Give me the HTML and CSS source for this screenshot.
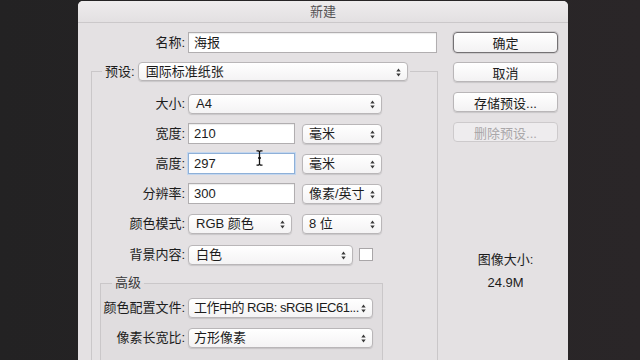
FILE: index.html
```html
<!DOCTYPE html>
<html lang="zh-CN">
<head>
  <meta charset="UTF-8" />
  <meta name="viewport" content="width=device-width, initial-scale=1" />
  <title>新建</title>
  <link rel="stylesheet" href="styles.css">
</head>
<body>
  <svg width="0" height="0" class="defs">
    <symbol id="updown" viewBox="0 0 5 9">
      <path d="M0.3 3.6 L2.5 0.6 L4.7 3.6 Z M0.3 5.4 L2.5 8.4 L4.7 5.4 Z" fill="#3a3a3a" />
    </symbol>
  </svg>

  <div class="window">
    <div class="titlebar">新建</div>

    <div class="content">
      <div class="main">
        <div class="row name-row">
          <label class="lbl">名称:</label>
          <div class="field name-field">海报</div>
        </div>

        <fieldset class="group preset">
          <legend>
            <span class="legend-inner">
              <label class="lbl-inline">预设:</label>
              <div class="popup preset-popup">国际标准纸张<svg class="arrows"><use href="#updown" /></svg></div>
            </span>
          </legend>

          <div class="row">
            <label class="lbl">大小:</label>
            <div class="popup size-popup">A4<svg class="arrows"><use href="#updown" /></svg></div>
          </div>

          <div class="row">
            <label class="lbl">宽度:</label>
            <div class="field num">210</div>
            <div class="popup unit">毫米<svg class="arrows"><use href="#updown" /></svg></div>
          </div>

          <div class="row">
            <label class="lbl">高度:</label>
            <div class="field num focused">297
              <svg class="ibeam" viewBox="0 0 7 16"><path d="M0.5 0.8 H2.5 L3.5 1.8 L4.5 0.8 H6.5 M3.5 1.8 V14.2 M0.5 15.2 H2.5 L3.5 14.2 L4.5 15.2 H6.5 M2 8 H5" stroke="#111" stroke-width="1.3" fill="none" /></svg>
            </div>
            <div class="popup unit">毫米<svg class="arrows"><use href="#updown" /></svg></div>
          </div>

          <div class="row">
            <label class="lbl">分辨率:</label>
            <div class="field num">300</div>
            <div class="popup unit">像素/英寸<svg class="arrows"><use href="#updown" /></svg></div>
          </div>

          <div class="row">
            <label class="lbl">颜色模式:</label>
            <div class="popup mode-popup">RGB 颜色<svg class="arrows"><use href="#updown" /></svg></div>
            <div class="popup unit bits">8 位<svg class="arrows"><use href="#updown" /></svg></div>
          </div>

          <div class="row bg-row">
            <label class="lbl">背景内容:</label>
            <div class="popup bg-popup">白色<svg class="arrows"><use href="#updown" /></svg></div>
            <div class="swatch"></div>
          </div>

          <fieldset class="group advanced">
            <legend>高级</legend>
            <div class="row">
              <label class="lbl">颜色配置文件:</label>
              <div class="popup adv-popup"><span class="tight">工作中的 RGB: sRGB IEC61...</span><svg class="arrows"><use href="#updown" /></svg></div>
            </div>
            <div class="row">
              <label class="lbl">像素长宽比:</label>
              <div class="popup adv-popup">方形像素<svg class="arrows"><use href="#updown" /></svg></div>
            </div>
          </fieldset>
        </fieldset>
      </div>

      <div class="side">
        <button class="btn default">确定</button>
        <button class="btn">取消</button>
        <button class="btn">存储预设...</button>
        <button class="btn" disabled>删除预设...</button>

        <div class="info">
          <div>图像大小:</div>
          <div>24.9M</div>
        </div>
      </div>
    </div>
  </div>
</body>
</html>
```

FILE: styles.css
```css
body {
  margin: 0;
  height: 360px;
  overflow: hidden;
  background: linear-gradient(to right, #232223, #2a2628);
  font-family: "Liberation Sans", "Noto Sans CJK SC", sans-serif;
  font-size: 13px;
  color: #1c1c1c;
}

.defs {
  position: absolute;
}

.window {
  margin: 1px 0 0 78px;
  width: 490px;
  height: 400px;
  background: #e4e1e3;
  border-radius: 5px 5px 0 0;
  overflow: hidden;
}

.titlebar {
  height: 21px;
  line-height: 22px;
  text-align: center;
  background: linear-gradient(#eeeced, #e3e0e2);
  border-bottom: 1px solid #cbc8ca;
  color: #555355;
}

.content {
  display: flex;
  padding: 9px 10px 0 0;
}

.main {
  width: 360px;
  flex-shrink: 0;
}

.row {
  display: flex;
  align-items: center;
  height: 21px;
  margin-bottom: 9px;
}

.lbl {
  flex-shrink: 0;
  width: 93px;
  margin-right: 3px;
  text-align: right;
  line-height: 21px;
}

.name-row .lbl {
  width: 107px;
}

/* text fields */
.field {
  position: relative;
  box-sizing: border-box;
  height: 21px;
  line-height: 19px;
  padding-left: 5px;
  background: #fff;
  border: 1px solid #b1aeb0;
  box-shadow: inset 0 1px 1px rgba(0, 0, 0, 0.08);
}

.name-field {
  width: 249px;
}

.num {
  width: 107px;
  margin-right: 7px;
}

.focused {
  border-color: #8eb0d8;
  box-shadow: 0 0 0 1px #c3d6ee;
}

.ibeam {
  position: absolute;
  left: 67px;
  top: -4px;
  width: 7px;
  height: 16px;
}

/* popup menus */
.popup {
  position: relative;
  box-sizing: border-box;
  height: 20px;
  line-height: 18px;
  padding-left: 7px;
  background: linear-gradient(#ffffff, #f4f3f4);
  border: 1px solid #b9b6b8;
  border-radius: 4px;
  box-shadow: 0 1px 1px rgba(0, 0, 0, 0.12);
  white-space: nowrap;
}

.arrows {
  position: absolute;
  right: 6px;
  top: 5px;
  width: 5px;
  height: 9px;
}

.unit {
  width: 80px;
  padding-left: 6px;
}

.size-popup {
  width: 194px;
}

.mode-popup {
  width: 104px;
  margin-right: 10px;
}

.bg-popup {
  width: 165px;
  margin-right: 6px;
}

.adv-popup {
  width: 185px;
  padding-left: 5px;
}

.tight {
  letter-spacing: -0.5px;
}

.bg-row {
  margin-top: 10px;
}

.swatch {
  width: 14px;
  height: 13px;
  box-sizing: border-box;
  background: #fff;
  border: 1px solid #a9a6a8;
}

/* group boxes */
.group {
  margin: 0;
  padding: 0;
  border: 1px solid #cac7c9;
  min-width: 0;
}

.preset {
  box-sizing: border-box;
  width: 347px;
  margin: 7px 0 0 13px;
  padding: 12px 0 40px 0;
}

.preset > legend {
  margin-left: 10px;
  padding: 0 2px 0 3px;
}

.legend-inner {
  display: flex;
  align-items: center;
  height: 19px;
}

.lbl-inline {
  line-height: 19px;
  margin-right: 3px;
}

.preset-popup {
  width: 270px;
  height: 19px;
  line-height: 17px;
}

.advanced {
  box-sizing: border-box;
  width: 283px;
  margin: 7px 0 0 8px;
  padding: 5px 0 20px 0;
  background: rgba(0, 0, 0, 0.015);
}

.advanced > legend {
  margin-left: 11px;
  padding: 0 3px;
  line-height: 18px;
  color: #3a393a;
}

.advanced .lbl {
  width: 84px;
}

/* side buttons */
.side {
  width: 105px;
  margin-left: 15px;
  display: flex;
  flex-direction: column;
  gap: 10px;
}

.btn {
  height: 20px;
  padding: 0;
  font: inherit;
  color: #1c1c1c;
  background: linear-gradient(#ffffff, #f3f2f3);
  border: 1px solid #b9b6b8;
  border-radius: 4px;
  box-shadow: 0 1px 1px rgba(0, 0, 0, 0.12);
}

.btn.default {
  height: 21px;
  border-color: #747174;
  box-shadow: 0 0 0 1px rgba(0, 0, 0, 0.1);
}

.side .btn.default + .btn {
  margin-top: -1px;
}

.btn:disabled {
  color: #aaa7a9;
  background: #eeecee;
  border-color: #cdcacc;
  box-shadow: none;
}

.info {
  margin-top: 96px;
  text-align: center;
  line-height: 23px;
}
```
